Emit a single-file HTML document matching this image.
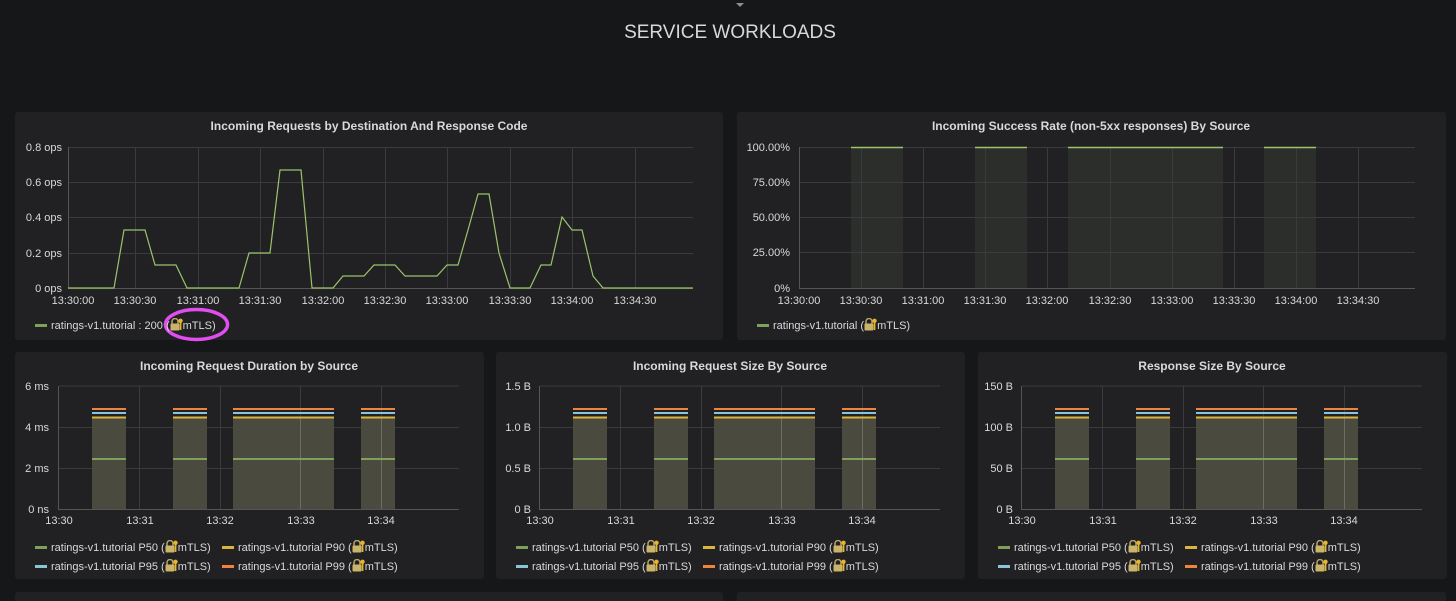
<!DOCTYPE html>
<html><head><meta charset="utf-8"><style>
html,body{margin:0;padding:0;background:#161719;width:1456px;height:601px;overflow:hidden;position:relative}
svg{display:block}
text{font-family:"Liberation Sans",sans-serif;fill:#d8d9da}
.t{font-size:12px;font-weight:bold;text-anchor:middle}
.a{font-size:11px}
.r{text-anchor:end}
.m{text-anchor:middle}
.lg{position:absolute;font-family:"Liberation Sans",sans-serif;font-size:11px;color:#d8d9da;white-space:nowrap;line-height:14px;height:14px}
.lg i{display:inline-block;width:12px;height:3px;vertical-align:middle;margin-right:4px;position:relative;top:-1px}
.lg svg{display:inline-block;vertical-align:-2px;width:13px;height:13px}
</style></head><body>
<svg width="1456" height="601" viewBox="0 0 1456 601" xmlns="http://www.w3.org/2000/svg">
<defs>
<g id="bars">
<rect x="0" y="0" width="469" height="227" rx="3" fill="#212124"/>
<g stroke="#3a3b3e" stroke-width="1">
<line x1="44" y1="34" x2="444" y2="34"/><line x1="44" y1="75.5" x2="444" y2="75.5"/><line x1="44" y1="116.5" x2="444" y2="116.5"/>
<line x1="124.5" y1="34" x2="124.5" y2="157"/><line x1="205.5" y1="34" x2="205.5" y2="157"/><line x1="285.5" y1="34" x2="285.5" y2="157"/><line x1="366.5" y1="34" x2="366.5" y2="157"/>
</g>
<line x1="43.5" y1="34" x2="43.5" y2="157" stroke="#555"/><line x1="43" y1="157.5" x2="444" y2="157.5" stroke="#555"/>
<g fill="#4a4a3e"><rect x="77" y="66" width="34" height="91"/><rect x="158" y="66" width="34" height="91"/><rect x="218" y="66" width="101" height="91"/><rect x="346" y="66" width="34" height="91"/></g>
<g stroke="#d8d9da" stroke-opacity=".25"><line x1="285.5" y1="66" x2="285.5" y2="157"/><line x1="366.5" y1="66" x2="366.5" y2="157"/></g>
<g stroke-width="2">
<path d="M77 57h34M158 57h34M218 57h101M346 57h34" stroke="#ef843c"/>
<path d="M77 61h34M158 61h34M218 61h101M346 61h34" stroke="#8ac4d9"/>
<path d="M77 65.5h34M158 65.5h34M218 65.5h101M346 65.5h34" stroke="#d9b43e"/>
<path d="M77 107h34M158 107h34M218 107h101M346 107h34" stroke="#7ea05a"/>
</g>
<text class="a m" x="44" y="172">13:30</text><text class="a m" x="125" y="172">13:31</text><text class="a m" x="205" y="172">13:32</text><text class="a m" x="286" y="172">13:33</text><text class="a m" x="366" y="172">13:34</text>
</g>
</defs>
<path d="M736 3h8l-4 4z" fill="#8e8e8e"/>
<text x="730" y="38" style="font-size:19px;text-anchor:middle;fill:#d8d9da">SERVICE WORKLOADS</text>

<rect x="15" y="112" width="708" height="228" rx="3" fill="#212124"/>
<text class="t" x="369" y="130">Incoming Requests by Destination And Response Code</text>
<g stroke="#3a3b3e">
<line x1="68" y1="147.5" x2="693" y2="147.5"/><line x1="68" y1="182.5" x2="693" y2="182.5"/><line x1="68" y1="217.5" x2="693" y2="217.5"/><line x1="68" y1="253.5" x2="693" y2="253.5"/>
<line x1="135.5" y1="147" x2="135.5" y2="288"/><line x1="198.5" y1="147" x2="198.5" y2="288"/><line x1="260.5" y1="147" x2="260.5" y2="288"/><line x1="323.5" y1="147" x2="323.5" y2="288"/><line x1="385.5" y1="147" x2="385.5" y2="288"/><line x1="447.5" y1="147" x2="447.5" y2="288"/><line x1="510.5" y1="147" x2="510.5" y2="288"/><line x1="572.5" y1="147" x2="572.5" y2="288"/><line x1="635.5" y1="147" x2="635.5" y2="288"/>
</g>
<line x1="68.5" y1="147" x2="68.5" y2="288" stroke="#555"/><line x1="68" y1="288.5" x2="693" y2="288.5" stroke="#555"/>
<text class="a r" x="62" y="151">0.8 ops</text><text class="a r" x="62" y="186">0.6 ops</text><text class="a r" x="62" y="221">0.4 ops</text><text class="a r" x="62" y="257">0.2 ops</text><text class="a r" x="62" y="292">0 ops</text>
<text class="a m" x="73" y="304">13:30:00</text><text class="a m" x="135" y="304">13:30:30</text><text class="a m" x="198" y="304">13:31:00</text><text class="a m" x="260" y="304">13:31:30</text><text class="a m" x="323" y="304">13:32:00</text><text class="a m" x="385" y="304">13:32:30</text><text class="a m" x="447" y="304">13:33:00</text><text class="a m" x="510" y="304">13:33:30</text><text class="a m" x="572" y="304">13:34:00</text><text class="a m" x="635" y="304">13:34:30</text>
<polyline fill="none" stroke="#9ac46a" stroke-width="1.2" points="68,288 114,288 124,230 145,230 155,265 176,265 187,288 239,288 249,253 270,253 280,170 301,170 312,288 333,288 343,276 364,276 374,265 395,265 405,276 437,276 447,265 458,265 468,230 478,194 489,194 499,253 510,288 530,288 541,265 551,265 562,217 572,230 582,230 593,276 603,288 693,288"/>
<ellipse cx="196.5" cy="324.5" rx="31" ry="15" fill="none" stroke="#e04ef0" stroke-width="3.5"/>

<rect x="737" y="112" width="709" height="228" rx="3" fill="#212124"/>
<text class="t" x="1091" y="130">Incoming Success Rate (non-5xx responses) By Source</text>
<g fill="#2c2e2b"><rect x="851" y="147" width="52" height="141"/><rect x="975" y="147" width="52" height="141"/><rect x="1068" y="147" width="155" height="141"/><rect x="1264" y="147" width="52" height="141"/></g>
<g stroke="#3a3b3e">
<line x1="799" y1="147.5" x2="1415" y2="147.5"/><line x1="799" y1="182.5" x2="1415" y2="182.5"/><line x1="799" y1="217.5" x2="1415" y2="217.5"/><line x1="799" y1="252.5" x2="1415" y2="252.5"/>
<line x1="861.5" y1="147" x2="861.5" y2="288"/><line x1="923.5" y1="147" x2="923.5" y2="288"/><line x1="985.5" y1="147" x2="985.5" y2="288"/><line x1="1047.5" y1="147" x2="1047.5" y2="288"/><line x1="1110.5" y1="147" x2="1110.5" y2="288"/><line x1="1172.5" y1="147" x2="1172.5" y2="288"/><line x1="1234.5" y1="147" x2="1234.5" y2="288"/><line x1="1296.5" y1="147" x2="1296.5" y2="288"/><line x1="1358.5" y1="147" x2="1358.5" y2="288"/>
</g>
<line x1="799.5" y1="147" x2="799.5" y2="288" stroke="#555"/><line x1="799" y1="288.5" x2="1415" y2="288.5" stroke="#555"/>
<path d="M851 147.5h52M975 147.5h52M1068 147.5h155M1264 147.5h52" stroke="#9ac46a" stroke-width="1.5"/>
<text class="a r" x="790" y="151">100.00%</text><text class="a r" x="790" y="186">75.00%</text><text class="a r" x="790" y="221">50.00%</text><text class="a r" x="790" y="256">25.00%</text><text class="a r" x="790" y="292">0%</text>
<text class="a m" x="799" y="304">13:30:00</text><text class="a m" x="861" y="304">13:30:30</text><text class="a m" x="923" y="304">13:31:00</text><text class="a m" x="985" y="304">13:31:30</text><text class="a m" x="1047" y="304">13:32:00</text><text class="a m" x="1110" y="304">13:32:30</text><text class="a m" x="1172" y="304">13:33:00</text><text class="a m" x="1234" y="304">13:33:30</text><text class="a m" x="1296" y="304">13:34:00</text><text class="a m" x="1358" y="304">13:34:30</text>

<use href="#bars" x="15" y="352"/>
<text class="t" x="249" y="370">Incoming Request Duration by Source</text>
<text class="a r" x="49" y="390">6 ms</text><text class="a r" x="49" y="431">4 ms</text><text class="a r" x="49" y="472">2 ms</text><text class="a r" x="49" y="513">0 ns</text>
<use href="#bars" x="496" y="352"/>
<text class="t" x="730" y="370">Incoming Request Size By Source</text>
<text class="a r" x="531" y="390">1.5 B</text><text class="a r" x="531" y="431">1.0 B</text><text class="a r" x="531" y="472">0.5 B</text><text class="a r" x="531" y="513">0 B</text>
<use href="#bars" x="978" y="352"/>
<text class="t" x="1212" y="370">Response Size By Source</text>
<text class="a r" x="1013" y="390">150 B</text><text class="a r" x="1013" y="431">100 B</text><text class="a r" x="1013" y="472">50 B</text><text class="a r" x="1013" y="513">0 B</text>

<rect x="15" y="592" width="708" height="20" rx="3" fill="#212124"/>
<rect x="737" y="592" width="709" height="20" rx="3" fill="#212124"/>
</svg>

<div class="lg" style="left:35px;top:318px"><i style="background:#7ea05a"></i>ratings-v1.tutorial : 200 (<svg viewBox="0 0 13 13"><path d="M2,5.5 V3.5 A3,3 0 0 1 8,3.5 V5.5" fill="none" stroke="#b8a468" stroke-width="1.5"/><rect x="0.5" y="5.5" width="9" height="7" rx="1" fill="#c9b46a"/><circle cx="10.5" cy="2.8" r="2.2" fill="#e7b52c"/><rect x="9.8" y="4" width="1.6" height="8" fill="#e7b52c"/></svg>mTLS)</div>
<div class="lg" style="left:757px;top:318px"><i style="background:#7ea05a"></i>ratings-v1.tutorial (<svg viewBox="0 0 13 13"><path d="M2,5.5 V3.5 A3,3 0 0 1 8,3.5 V5.5" fill="none" stroke="#b8a468" stroke-width="1.5"/><rect x="0.5" y="5.5" width="9" height="7" rx="1" fill="#c9b46a"/><circle cx="10.5" cy="2.8" r="2.2" fill="#e7b52c"/><rect x="9.8" y="4" width="1.6" height="8" fill="#e7b52c"/></svg>mTLS)</div>

<div id="L"></div>
<script>
var lk='<svg viewBox="0 0 13 13"><path d="M2,5.5 V3.5 A3,3 0 0 1 8,3.5 V5.5" fill="none" stroke="#b8a468" stroke-width="1.5"/><rect x="0.5" y="5.5" width="9" height="7" rx="1" fill="#c9b46a"/><circle cx="10.5" cy="2.8" r="2.2" fill="#e7b52c"/><rect x="9.8" y="4" width="1.6" height="8" fill="#e7b52c"/></svg>';
var h='';[15,496,978].forEach(function(o){
[[20,540,'#7ea05a','P50'],[207,540,'#d9b43e','P90'],[20,559,'#8ac4d9','P95'],[207,559,'#ef843c','P99']].forEach(function(e){
h+='<div class="lg" style="left:'+(o+e[0])+'px;top:'+e[1]+'px"><i style="background:'+e[2]+'"></i>ratings-v1.tutorial '+e[3]+' ('+lk+'mTLS)</div>';});});
document.getElementById('L').innerHTML=h;
</script>
</body></html>
